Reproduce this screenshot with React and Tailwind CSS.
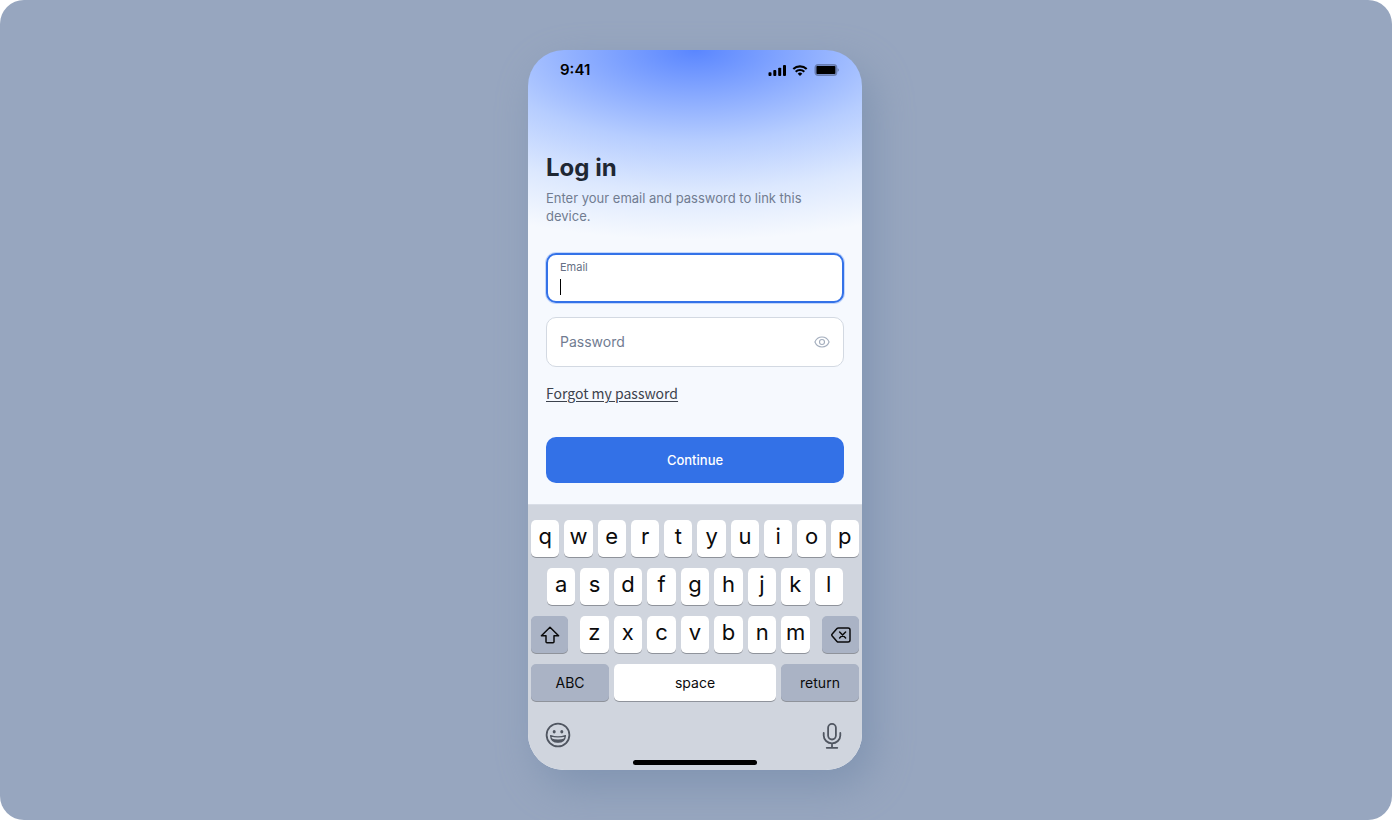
import { useState } from "react";

const keyBase = "h-[37px] rounded-[5px] shadow-[0_1px_0_#8f939b] flex items-center justify-center text-[#0b0b0c]";

const Key = ({ label }) => (
    <button type="button" className={`${keyBase} flex-1 min-w-0 bg-white text-[22px] leading-6 pb-[5px]`}>{label}</button>
)

const StatusBar = () => (
    <div className="flex items-center justify-between h-10 pl-8 pr-[23px] text-black">
        <span className="text-[15px] leading-5 font-semibold">9:41</span>
        <div className="flex items-center gap-[6px]">
            <svg width="18" height="11" viewBox="0 0 18 11" fill="currentColor" aria-hidden="true">
                <rect x="0.5" y="7.2" width="3" height="3.8" rx="0.9" />
                <rect x="5.3" y="5" width="3" height="6" rx="0.9" />
                <rect x="10.2" y="2.7" width="3" height="8.3" rx="0.9" />
                <rect x="15" y="0" width="3" height="11" rx="0.9" />
            </svg>
            <svg width="16" height="11" viewBox="0 0 16 11" aria-hidden="true">
                <g fill="none" stroke="currentColor" strokeWidth="2.1">
                    <path d="M1.3 4.1a9.6 9.6 0 0 1 13.4 0" />
                    <path d="M3.7 6.7a6.2 6.2 0 0 1 8.6 0" />
                </g>
                <path d="M8 11 5.7 8.7a3.3 3.3 0 0 1 4.6 0Z" fill="currentColor" />
            </svg>
            <svg width="25" height="12" viewBox="0 0 25 12" aria-hidden="true">
                <rect x="1.4" y="0.9" width="21" height="10.2" rx="2.6" fill="none" stroke="currentColor" strokeOpacity="0.3" strokeWidth="1.8" />
                <rect x="2.4" y="1.9" width="19" height="8.2" rx="1" fill="currentColor" />
                <path d="M23.6 4.2v3.6c.8-.3 1.2-1 1.2-1.8s-.4-1.5-1.2-1.8Z" fill="currentColor" fillOpacity="0.35" />
            </svg>
        </div>
    </div>
)

const LoginForm = () => {
    const [email, setEmail] = useState("")
    const [password, setPassword] = useState("")
    const [visible, setVisible] = useState(false)

    return (
        <form onSubmit={(e) => e.preventDefault()} className="px-[18px] pt-16 pb-[21px]">
            <h1 className="text-2xl leading-7 font-bold text-[#1f2733]">Log in</h1>
            <p className="mt-[7px] text-[13px] leading-[18px] text-[#717c91]">Enter your email and password to link this device.</p>

            <div className="mt-7 h-[50px] rounded-[10px] border-2 border-[#3472e8] bg-white px-3 pt-1 shadow-[0_0_0_1px_#c3d6fb]">
                <label htmlFor="email" className="block text-[11px] leading-4 text-[#667085]">Email</label>
                <div className="flex items-center h-6">
                    {!email && <span className="w-px h-4 bg-black" />}
                    <input
                        id="email"
                        type="email"
                        value={email}
                        onChange={(e) => setEmail(e.target.value)}
                        className="flex-1 min-w-0 text-sm outline-none"
                    />
                </div>
            </div>

            <div className="mt-[14px] h-[50px] flex items-center rounded-[10px] border border-[#d3d9e2] bg-white px-[13px]">
                <input
                    type={visible ? "text" : "password"}
                    aria-label="Password"
                    placeholder="Password"
                    value={password}
                    onChange={(e) => setPassword(e.target.value)}
                    className="flex-1 min-w-0 text-sm leading-5 outline-none placeholder:text-[#717c91]"
                />
                <button type="button" aria-label="Show password" onClick={() => setVisible(!visible)}>
                    <svg width="16" height="12" viewBox="0 0 16 12" fill="none" stroke="#a3adbd" strokeWidth="1.1" aria-hidden="true">
                        <path d="M0.9 6C2.3 2.7 4.9 1 8 1s5.7 1.7 7.1 5C13.7 9.3 11.1 11 8 11S2.3 9.3 0.9 6Z" />
                        <circle cx="8" cy="6" r="2.5" />
                    </svg>
                </button>
            </div>

            <a href="#forgot" className="mt-4 block w-fit font-['Noto_Sans_CJK_SC',sans-serif] text-sm leading-5 text-[#3c424d] underline underline-offset-2">Forgot my password</a>

            <button type="submit" className="mt-[34px] w-full h-[46px] rounded-[10px] bg-[#3371e7] text-[13px] leading-5 font-medium text-white">Continue</button>
        </form>
    )
}

const Keyboard = () => (
    <div className="bg-[#d0d5de] border-t border-[#d9dee7] px-[3px] pt-[15px] pb-[5px]">
        <div className="flex flex-col gap-[11px]">
            <div className="flex gap-[5px]">
                {"qwertyuiop".split("").map((k) => <Key key={k} label={k} />)}
            </div>
            <div className="flex gap-[5px] px-4">
                {"asdfghjkl".split("").map((k) => <Key key={k} label={k} />)}
            </div>
            <div className="flex gap-3">
                <button type="button" aria-label="Shift" className={`${keyBase} w-[37px] bg-[#aab3c5]`}>
                    <svg width="20" height="18" viewBox="0 0 20 18" fill="none" stroke="currentColor" strokeWidth="1.5" strokeLinejoin="round" aria-hidden="true">
                        <path d="M10 1.2 18.6 9.8H14v6a1 1 0 0 1-1 1H7a1 1 0 0 1-1-1v-6H1.4Z" />
                    </svg>
                </button>
                <div className="flex flex-1 gap-[5px]">
                    {"zxcvbnm".split("").map((k) => <Key key={k} label={k} />)}
                </div>
                <button type="button" aria-label="Delete" className={`${keyBase} w-[37px] bg-[#aab3c5]`}>
                    <svg width="20" height="16" viewBox="0 0 20 16" fill="none" stroke="currentColor" strokeWidth="1.5" strokeLinecap="round" strokeLinejoin="round" aria-hidden="true">
                        <path d="M7.5 0.9H17a2 2 0 0 1 2 2v10.2a2 2 0 0 1-2 2H7.500a2 2 0 0 1-1.5-.7L1.2 8.9a1.3 1.3 0 0 1 0-1.8L6 1.6a2 2 0 0 1 1.5-.7Z" />
                        <path d="m8.6 5 6 6M14.6 5l-6 6" />
                    </svg>
                </button>
            </div>
            <div className="flex gap-[5px] text-sm leading-5">
                <button type="button" className={`${keyBase} w-[78px] bg-[#aab3c5]`}>ABC</button>
                <button type="button" className={`${keyBase} flex-1 bg-white`}>space</button>
                <button type="button" className={`${keyBase} w-[78px] bg-[#aab3c5]`}>return</button>
            </div>
        </div>
        <div className="flex items-center justify-between mt-5 pl-[14px] pr-[17px] text-[#505661]">
            <button type="button" aria-label="Emoji">
                <svg width="26" height="26" viewBox="0 0 26 26" fill="none" stroke="currentColor" strokeWidth="1.8" aria-hidden="true">
                    <circle cx="13" cy="13" r="11.4" />
                    <ellipse cx="9.2" cy="9.8" rx="1.5" ry="1.8" fill="currentColor" stroke="none" />
                    <ellipse cx="16.8" cy="9.8" rx="1.5" ry="1.8" fill="currentColor" stroke="none" />
                    <path d="M5.6 13.600c2.3.9 4.7 1.3 7.4 1.3s5.1-.4 7.4-1.3c-.3 4-3.2 6.6-7.4 6.6s-7.1-2.6-7.4-6.6Z" strokeWidth="1.3" strokeLinejoin="round" />
                    <path d="M6.500 16.500c3.900 1.3 9.100 1.3 13 0-1.1 2.6-3.6 3.8-6.5 3.8s-5.4-1.2-6.5-3.8Z" fill="currentColor" stroke="none" />
                </svg>
            </button>
            <button type="button" aria-label="Dictate" className="pt-[2px]">
                <svg width="20" height="26" viewBox="0 0 20 26" fill="none" stroke="currentColor" strokeWidth="1.8" strokeLinecap="round" aria-hidden="true">
                    <rect x="6.1" y="0.9" width="7.8" height="15.6" rx="3.9" />
                    <path d="M1.7 10v2.5a8.3 7.8 0 0 0 16.6 0V10M10 20.3v4.5M4.7 24.8h10.6" />
                </svg>
            </button>
        </div>
        <div className="mx-auto mt-[11px] h-[5px] w-[124px] rounded-full bg-black" />
    </div>
)

const App = () => {
    return (
        <div className="bg-white">
            <main className="min-h-screen rounded-[24px] bg-[#97a6bf] flex items-center justify-center py-6 pr-0.5 font-['Inter',sans-serif]">
                <div className="w-full max-w-[334px] overflow-hidden rounded-[36px] bg-[#f6f9fe] bg-[radial-gradient(430px_190px_at_50%_0,#5a86ff_0%,#8aabff_25%,#b6cdff_48%,#dce8fe_74%,#f6f9fe_100%)] shadow-[10px_16px_40px_#8094b1]">
                    <StatusBar />
                    <LoginForm />
                    <Keyboard />
                </div>
            </main>
        </div>
    )
}

export default App
